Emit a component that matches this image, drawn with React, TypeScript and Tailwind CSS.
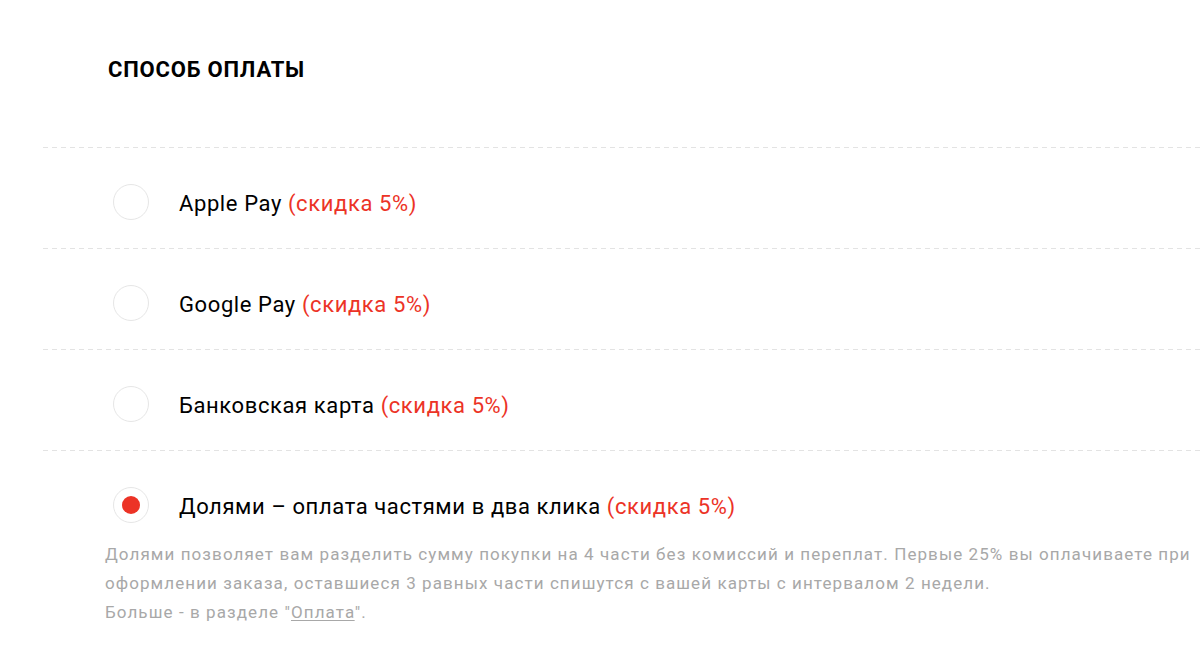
import React from "react";

const options = [
  { label: "Apple Pay", selected: false },
  { label: "Google Pay", selected: false },
  { label: "Банковская карта", selected: false },
  { label: "Долями – оплата частями в два клика", selected: true },
];

function Dash() {
  return (
    <div className="h-px w-full bg-[linear-gradient(to_right,#e3e3e3_5px,transparent_5px)] bg-[length:9px_1px] bg-repeat-x" />
  );
}

export default function App() {
  return (
    <div className="min-h-[657px] w-full overflow-hidden bg-white font-['Roboto',sans-serif] text-black">
      <h1 className="pl-[108px] pt-[56px] text-[22px] font-bold leading-[28px] tracking-[0.8px]">
        СПОСОБ ОПЛАТЫ
      </h1>
      <div className="mt-[63px] pl-[43px]">
        {options.map((o) => (
          <div key={o.label}>
            <Dash />
            <div className="flex items-center pb-[28px] pl-[70px] pt-[36px]">
              <div className="flex h-[36px] w-[36px] shrink-0 items-center justify-center rounded-full border border-[#e6e6e6]">
                {o.selected && <div className="h-[18px] w-[18px] rounded-full bg-[#ec3326]" />}
              </div>
              <div className="ml-[30px] pt-[4px] text-[22px] leading-[28px] tracking-[0.6px]">
                {o.label} <span className="text-[#ec3326]">(скидка 5%)</span>
              </div>
            </div>
          </div>
        ))}
      </div>
      <p className="-mt-[11px] pl-[105px] text-[17px] leading-[29px] tracking-[1.08px] text-[#a8a8a8]">
        Долями позволяет вам разделить сумму покупки на 4 части без комиссий и переплат. Первые 25% вы оплачиваете при
        <br />
        оформлении заказа, оставшиеся 3 равных части спишутся с вашей карты с интервалом 2 недели.
        <br />
        Больше - в разделе "<span className="underline underline-offset-2">Оплата</span>".
      </p>
    </div>
  );
}
